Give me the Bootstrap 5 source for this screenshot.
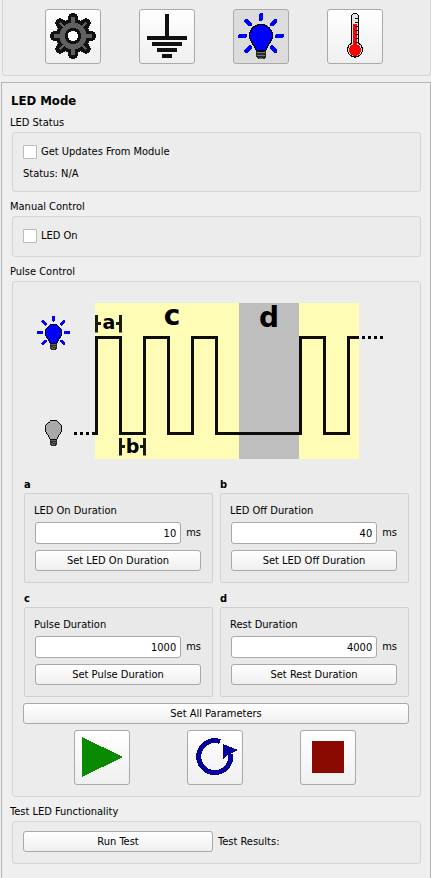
<!DOCTYPE html>
<html lang="en">
<head>
<meta charset="utf-8">
<meta name="viewport" content="width=device-width, initial-scale=1">
<title>LED Mode</title>
<link href="https://cdn.jsdelivr.net/npm/bootstrap@5.3.0/dist/css/bootstrap.min.css" rel="stylesheet">
<style>
body { background: #efefef; color: #000; font: 11px/16px "DejaVu Sans Condensed", "Noto Sans", sans-serif; }
.toolbar { background: #ececec; border: 1px solid #d5d5d5; border-top: 0; border-radius: 0 0 3px 3px; margin: 0 0 6px 2px; padding: 9px 28px 11px 23px; }
.panel { border: 1px solid #b5b5b5; border-bottom: 0; margin-left: 1px; padding: 8px 9px 14px 8px; }
.panel-title { font-size: 13px; line-height: 20px; font-weight: 700; margin: 0 0 1px 1px; }
.group-title { font-size: 11px; line-height: 18px; margin: 4px 0 0; padding-top: 2px; float: none; }
.group-title.first { margin-top: 0; }
.group { background: #ececec; border: 1px solid #d5d5d5; border-radius: 3px; margin-left: 2px; padding: 8px 11px 9px 10px; }
.group-status { padding-bottom: 6px; }
.group-row { min-height: 22px; }
.group-row .form-check-input { width: 14px; height: 14px; border: 1px solid #bcbcbc; border-radius: 1px; background-color: #fff; }
.group-row .form-check-input:checked { background-color: #4a86c8; }
.group-pulse { padding-top: 0; padding-bottom: 11px; }
.group-test { padding-top: 9px; padding-bottom: 11px; }
.tool { width: 56px; height: 55px; padding: 0; }
.tool, .push { border: 1px solid #a9a9a9; border-radius: 3px; background: linear-gradient(#fff, #efefef); color: #000; }
.tool svg { display: block; width: 54px; height: 53px; }
.tool.pressed, .tool:active { background: #dcdcdc; }
.push { height: 21px; padding: 1px 0 0; font-size: 11px; line-height: 18px; }
.push:hover { background: #fff; }
.params { display: grid; grid-template-columns: 1fr 1fr; gap: 6px 7px; margin: 0 0 6px 1px; }
.param-name { font-size: 11px; line-height: 16px; padding-top: 2px; font-weight: 700; margin: 0; }
.param { background: #e9e9e9; border: 1px solid #d0d0d0; border-radius: 2px; padding: 9px 11px 11px 10px; }
.param label { display: block; margin: 0 0 3px -1px; }
.param .push { margin-top: 6px; }
.param input { min-width: 0; height: 22px; border: 1px solid #a9a9a9; border-radius: 3px; padding: 1px 4px 0; font-size: 11px; line-height: 18px; text-align: right; color: #000; background: #fff; }
.unit { padding-left: 5px; }
.controls { gap: 57px; margin-top: 6px; padding-right: 2px; }
.half { width: 50%; max-width: 190px; }
.diagram text { font-family: "DejaVu Sans", sans-serif; font-weight: 700; }
</style>
<script src="https://cdn.jsdelivr.net/npm/bootstrap@5.3.0/dist/js/bootstrap.bundle.min.js"></script>
</head>
<body class="d-flex flex-column min-vh-100">
<svg width="0" height="0" class="position-absolute" aria-hidden="true">
  <defs>
    <g id="bulb">
      <path d="M23 40h10v8l-2 2h-6l-2-2z" fill="#2a2a2a"/>
      <path d="M24 44l8-1M24 47l8-1M26 49h4" stroke="#777" stroke-width="1"/>
      <path d="M28 15.500a11.500 11.500 0 0 1 11.500 11.500c0 5-3 7-4.500 9.500-1 1.500-1 3-2 4.500-2 1.500-8 1.500-10 0-1-1.500-1-3-2-4.500-1.500-2.500-4.500-4.500-4.500-9.500A11.500 11.500 0 0 1 28 15.500z" stroke="#000" stroke-width="1.300"/>
    </g>
    <g id="rays" stroke="#00f" stroke-width="4" stroke-linecap="round" fill="none">
      <path d="M28 6v4M7 27h5M44 27h5M13.500 12l3.500 3.500M42.500 12L39 15.500M13.500 42l3.500-3.500M42.500 42L39 38.500"/>
    </g>
  </defs>
</svg>

<nav class="toolbar d-flex" aria-label="Modes">
  <div class="flex-fill d-flex justify-content-center">
    <button type="button" class="tool" aria-label="Settings"><svg viewBox="1 1 54 53" shape-rendering="crispEdges">
      <g stroke="#111" stroke-width="10" stroke-linecap="round"><path d="M28 9v36M10 27h36M15.300 14.300l25.400 25.400M40.700 14.300L15.300 39.700"/></g>
      <circle cx="28" cy="27" r="17" fill="#111"/>
      <circle cx="28" cy="27" r="13.500" fill="#606060"/>
      <g stroke="#606060" stroke-width="4" stroke-linecap="round"><path d="M28 9.500v35M10.500 27h35"/></g>
      <g stroke="#606060" stroke-width="2.500" stroke-linecap="round"><path d="M15.500 14.500l25 25M40.500 14.500l-25 25"/></g>
      <circle cx="28" cy="27" r="8.200" fill="#111"/><circle cx="28" cy="27" r="5.200" fill="#fff"/>
    </svg></button>
  </div>
  <div class="flex-fill d-flex justify-content-center">
    <button type="button" class="tool" aria-label="Ground"><svg viewBox="1 1 54 53"><path fill="#111" d="M26 5h4v22h18v4H8v-4h18zM13 33h30v4H13zM18 39h20v4H18zM23 45h10v4H23z"/></svg></button>
  </div>
  <div class="flex-fill d-flex justify-content-center">
    <button type="button" class="tool pressed" aria-label="LED" aria-pressed="true"><svg viewBox="1 1 54 53" shape-rendering="crispEdges"><use href="#rays"/><use href="#bulb" fill="#00f"/></svg></button>
  </div>
  <div class="flex-fill d-flex justify-content-center">
    <button type="button" class="tool" aria-label="Temperature"><svg viewBox="1 1 54 53" shape-rendering="crispEdges">
      <path d="M24.500 34V8q0-3.500 3.500-3.500t3.500 3.500v26a7.500 7.500 0 1 1-7 0z" fill="#e4e4e4" stroke="#000" stroke-width="1.200"/>
      <circle cx="28" cy="41" r="6" fill="red"/><path d="M26 15h4v22h-4z" fill="red"/>
      <path d="M28 9.500h3M28 13.500h3M28 17.500h3M28 21.500h3M28 25.500h3M28 29.500h3M28 33.500h3" stroke="#111"/>
    </svg></button>
  </div>
</nav>

<main class="panel flex-grow-1">
  <h1 class="panel-title">LED Mode</h1>

  <section>
    <h2 class="group-title first">LED Status</h2>
    <div class="group group-status">
      <div class="group-row d-flex align-items-center gap-1">
        <input class="form-check-input m-0" type="checkbox" id="updates"><label for="updates">Get Updates From Module</label>
      </div>
      <div class="group-row d-flex align-items-center">Status: N/A</div>
    </div>
  </section>

  <section>
    <h2 class="group-title">Manual Control</h2>
    <div class="group">
      <div class="group-row d-flex align-items-center gap-1">
        <input class="form-check-input m-0" type="checkbox" id="ledon"><label for="ledon">LED On</label>
      </div>
    </div>
  </section>

  <section>
    <h2 class="group-title">Pulse Control</h2>
    <div class="group group-pulse">
      <svg class="diagram d-block mx-auto mw-100 h-auto" width="386" height="193" viewBox="23 282 386 193" role="img" aria-label="LED pulse timing">
        <path fill="#fffcb5" d="M95 303h264v156H95z"/>
        <path fill="#bebebe" d="M239 303h60v156h-60z"/>
        <path d="M92 433.500h4.500v-96h24v96h24v-96h24v96h24v-96h24v96h84v-96h24v96h24v-96H359" fill="none" stroke="#0c0c08" stroke-width="3"/>
        <path d="M74 433.500h18M362 337.500h21" stroke="#000" stroke-width="3" stroke-dasharray="3 3"/>
        <path d="M96.500 315v17.500M120.500 315v17.500M98 323.500h3M116 323.500h4M120.500 438v17.500M144.500 438v17.500M122 446.500h3M140 446.500h4" stroke="#1a1a12" stroke-width="3"/>
        <text x="109" y="329" font-size="19" text-anchor="middle">a</text>
        <text x="132.500" y="453" font-size="19" text-anchor="middle">b</text>
        <text x="172" y="325" font-size="28" text-anchor="middle">c</text>
        <text x="269" y="327" font-size="28" text-anchor="middle">d</text>
        <g shape-rendering="crispEdges">
          <g transform="translate(33 313) scale(.73)"><use href="#rays"/><use href="#bulb" fill="#00f"/></g>
          <use href="#bulb" fill="#a9a9a9" transform="translate(33 409) scale(.73)"/>
        </g>
      </svg>

      <div class="params">
        <div>
          <h3 class="param-name">a</h3>
          <div class="param">
            <label for="on">LED On Duration</label>
            <div class="d-flex align-items-center"><input id="on" type="text" class="flex-fill" value="10"><span class="unit">ms</span></div>
            <button type="button" class="push w-100 d-block">Set LED On Duration</button>
          </div>
        </div>
        <div>
          <h3 class="param-name">b</h3>
          <div class="param">
            <label for="off">LED Off Duration</label>
            <div class="d-flex align-items-center"><input id="off" type="text" class="flex-fill" value="40"><span class="unit">ms</span></div>
            <button type="button" class="push w-100 d-block">Set LED Off Duration</button>
          </div>
        </div>
        <div>
          <h3 class="param-name">c</h3>
          <div class="param">
            <label for="pulse">Pulse Duration</label>
            <div class="d-flex align-items-center"><input id="pulse" type="text" class="flex-fill" value="1000"><span class="unit">ms</span></div>
            <button type="button" class="push w-100 d-block">Set Pulse Duration</button>
          </div>
        </div>
        <div>
          <h3 class="param-name">d</h3>
          <div class="param">
            <label for="rest">Rest Duration</label>
            <div class="d-flex align-items-center"><input id="rest" type="text" class="flex-fill" value="4000"><span class="unit">ms</span></div>
            <button type="button" class="push w-100 d-block">Set Rest Duration</button>
          </div>
        </div>
      </div>

      <button type="button" class="push w-100 d-block">Set All Parameters</button>
      <div class="controls d-flex justify-content-center">
        <button type="button" class="tool" aria-label="Start"><svg viewBox="1 1 54 53" shape-rendering="crispEdges"><path fill="#0a8a00" d="M8 7l41 20L8 47z"/></svg></button>
        <button type="button" class="tool" aria-label="Repeat"><svg viewBox="1 1 54 53" shape-rendering="crispEdges"><path d="M33 11.500A16 16 0 1 0 43.500 24" fill="none" stroke="#08009a" stroke-width="5"/><path d="M36 14l15 6-6 3-4 2-5 4z" fill="#08009a"/></svg></button>
        <button type="button" class="tool" aria-label="Stop"><svg viewBox="1 1 54 53"><path fill="#8a0900" d="M12 11h32v32H12z"/></svg></button>
      </div>
    </div>
  </section>

  <section>
    <h2 class="group-title">Test LED Functionality</h2>
    <div class="group group-test d-flex align-items-center">
      <button type="button" class="push half">Run Test</button>
      <span class="unit">Test Results:</span>
    </div>
  </section>
</main>
</body>
</html>
